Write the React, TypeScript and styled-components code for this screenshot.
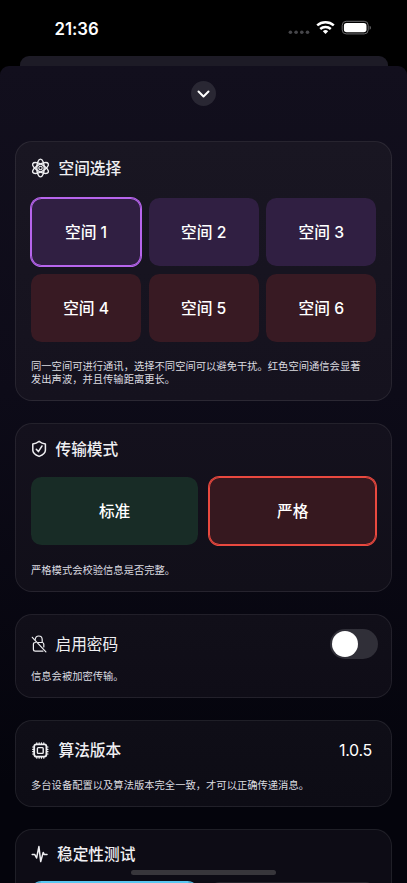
import React from "react";
import styled, { createGlobalStyle } from "styled-components";

const Global = createGlobalStyle`
  * { box-sizing: border-box; }
  html, body { margin: 0; background: #000; overflow: hidden; }
  body { font-family: Inter, "Noto Sans CJK SC", sans-serif; color: #fff; }
`;

const Screen = styled.div`
  position: relative;
  width: 407px;
  height: 883px;
  overflow: hidden;
  background: #000;
  display: flex;
  flex-direction: column;
`;

const StatusBar = styled.header`
  height: 56px;
  flex: none;
  padding: 0 35px 0 54.5px;
  display: flex;
  justify-content: space-between;
  align-items: center;
`;

const Clock = styled.time`
  padding-top: 1px;
  font-size: 16.8px;
  font-weight: 600;
  line-height: 20px;
  letter-spacing: -0.05px;
`;

const BackSheet = styled.div`
  height: 10px;
  flex: none;
  margin: 0 19.5px;
  border-radius: 9px 9px 0 0;
  background: #1d1b26;
`;

const Sheet = styled.main`
  height: 817px;
  flex: none;
  padding: 15px 15px 0;
  border-radius: 9px 9px 0 0;
  background: linear-gradient(180deg, #120f1d 0%, #0d0b18 40%, #04040c 88%, #04040c 100%);
  display: flex;
  flex-direction: column;
`;

const CloseButton = styled.button`
  width: 25px;
  height: 25px;
  flex: none;
  margin: 0 auto 35px;
  padding: 0;
  border: 0;
  border-radius: 50%;
  background: #292733;
  display: grid;
  place-items: center;
`;

const Card = styled.section<{ $height: number; $top: number; $tone: string }>`
  height: ${(p) => p.$height}px;
  flex: none;
  margin-bottom: 22px;
  padding: ${(p) => p.$top}px 14.5px 0 15px;
  border: 1px solid rgba(255, 255, 255, 0.08);
  border-radius: 17px;
  background: ${(p) => p.$tone};
  width: 377px;
`;

const CardHeader = styled.div`
  height: 24px;
  display: flex;
  align-items: center;
  justify-content: space-between;
`;

const Title = styled.h2<{ $gap: number; $weight?: number }>`
  margin: 0;
  display: flex;
  align-items: center;
  gap: ${(p) => p.$gap}px;
  font-size: 15.7px;
  line-height: 24px;
  font-weight: ${(p) => p.$weight ?? 500};
  color: #efeff2;
`;

const TitleText = styled.span`
  padding-top: 2px;
`;

const Version = styled.span`
  font-size: 16px;
  line-height: 24px;
  margin-right: 4.5px;
  letter-spacing: -0.3px;
`;

const TileGrid = styled.div<{ $columns: number; $gap: number; $top: number }>`
  margin-top: ${(p) => p.$top}px;
  width: 345.4px;
  display: grid;
  grid-template-columns: repeat(${(p) => p.$columns}, 1fr);
  gap: 8px ${(p) => p.$gap}px;
`;

const Tile = styled.button<{ $bg: string; $ring?: string }>`
  height: 68px;
  padding: 2px 0 0;
  border: 0;
  border-radius: 10.5px;
  background: ${(p) => p.$bg};
  box-shadow: ${(p) =>
    p.$ring ? `0 0 0 1px ${p.$ring}, inset 0 0 0 1px ${p.$ring}` : "none"};
  color: #fff;
  font: 500 15.7px/24px Inter, "Noto Sans CJK SC", sans-serif;
`;

const Note = styled.p<{ $top: number }>`
  margin: ${(p) => p.$top}px 0 0;
  font-size: 10.31px;
  line-height: 12.5px;
  color: #dcdce0;
  white-space: pre-line;
`;

const Switch = styled.button`
  width: 48px;
  height: 30px;
  margin-right: -1px;
  padding: 2px;
  border: 0;
  border-radius: 15px;
  background: #302f38;
  display: flex;
  flex: none;
`;

const Knob = styled.span`
  width: 26px;
  height: 26px;
  border-radius: 50%;
  background: #fff;
`;

const HomeIndicator = styled.div`
  position: absolute;
  left: 131px;
  top: 870px;
  width: 145px;
  height: 5px;
  border-radius: 3px;
  background: #37363b;
`;

const Icon = styled.svg`
  display: block;
  flex: none;
  overflow: visible;
`;

const line = {
  fill: "none",
  stroke: "currentColor",
  strokeLinecap: "round" as const,
  strokeLinejoin: "round" as const,
};

const StatusIcons = () => (
  <Icon width="84" height="16" viewBox="0 0 84 16">
    <g fill="#46464a">
      {[2.4, 8.1, 13.8, 19.5].map((x) => (
        <circle key={x} cx={x} cy="12.3" r="1.8" />
      ))}
    </g>
    <g fill="none" stroke="#fff" strokeWidth="2.5">
      <path d="M29.2 5.4a12.5 12.5 0 0 1 16.6 0" />
      <path d="M32.2 9a8 8 0 0 1 10.6 0" />
    </g>
    <path d="M37.5 14.1l-2.7-2.8a4 4 0 0 1 5.4 0z" fill="#fff" />
    <rect x="54.2" y="1.3" width="26" height="12.6" rx="4" fill="none" stroke="#6c6c6e" />
    <rect x="55.9" y="2.9" width="22.6" height="9.4" rx="2.8" fill="#fff" />
    <path d="M81.7 5.8c1.5.6 1.5 3.4 0 4z" fill="#77777a" />
  </Icon>
);

const AtomIcon = () => (
  <Icon width="18" height="20" viewBox="-9.5 -10 18 20" {...line} strokeWidth="1.4">
    <ellipse rx="3.7" ry="8.9" />
    <ellipse rx="3.7" ry="8.9" transform="rotate(60)" />
    <ellipse rx="3.7" ry="8.9" transform="rotate(-60)" />
    <circle r="1.7" strokeWidth="1.1" />
  </Icon>
);

const ShieldIcon = () => (
  <Icon width="15" height="18" viewBox="-.6 0 15 18" {...line} strokeWidth="1.5">
    <path d="M7.5 1.3C5.5 2.8 3.5 3.6 1.2 4v6.2c0 2.7 2.4 4.6 6.3 6.2 3.9-1.6 6.3-3.5 6.3-6.2V4c-2.3-.4-4.3-1.2-6.3-2.7z" />
    <path d="M4.7 9.2 6.8 11.6 10.4 6" />
  </Icon>
);

const LockSlashIcon = () => (
  <Icon width="15" height="18" viewBox="-.5 0 15 18" {...line} strokeWidth="1.2">
    <path d="M.8 2.3 14.4 16.8" />
    <path d="M3.8 4.3C4 2.2 5.3 1 7.2 1c2.1 0 3.5 1.5 3.5 3.8v2.7c1.1.1 1.6.6 1.6 1.7v2.7" />
    <path d="M6.4 7.5h4.3M3.9 7.5c-1.5 0-2 .5-2 1.8v5c0 1.3.6 1.9 1.9 1.9h7.6" />
  </Icon>
);

const ChipIcon = () => (
  <Icon width="17" height="17" viewBox="-.8 0 17 17" {...line}>
    <rect x="2.4" y="2.4" width="12.2" height="12.2" rx="2" strokeWidth="1.8" />
    <rect x="5.6" y="5.6" width="5.8" height="5.8" rx=".8" strokeWidth="1.4" />
    <path
      d="M5 .8V2M7.35.8V2M9.65.8V2M12 .8V2M5 15v1.2M7.35 15v1.2M9.65 15v1.2M12 15v1.2M.8 5H2M.8 7.35H2M.8 9.65H2M.8 12H2M15 5h1.2M15 7.35h1.2M15 9.65h1.2M15 12h1.2"
      strokeWidth="1.2"
    />
  </Icon>
);

const PulseIcon = () => (
  <Icon width="16" height="18" viewBox="-.4 0 16 18" {...line} strokeWidth="1.5">
    <path d="M.8 9.6h2.6L5.2 13 7.5 1.6l1.8 15 2.5-9.2 1.1 2.2h2.7" />
  </Icon>
);

const violet = "#301f42";
const maroon = "#381a23";
const spaces = [1, 2, 3, 4, 5, 6];

export default function App() {
  return (
    <>
      <Global />
      <Screen>
        <StatusBar>
          <Clock>21:36</Clock>
          <StatusIcons />
        </StatusBar>
        <BackSheet />
        <Sheet>
          <CloseButton aria-label="关闭">
            <Icon width="13" height="8" viewBox="0 0 13 8" {...line} stroke="#fff" strokeWidth="2">
              <path d="M1.5 1.5 6.5 6.5 11.5 1.5" />
            </Icon>
          </CloseButton>

          <Card $height={260} $top={14} $tone="linear-gradient(#191622, #15121e)">
            <CardHeader>
              <Title $gap={9.5}>
                <AtomIcon />
                <TitleText>空间选择</TitleText>
              </Title>
            </CardHeader>
            <TileGrid $columns={3} $gap={7.5} $top={17.6}>
              {spaces.map((n) => (
                <Tile key={n} $bg={n < 4 ? violet : maroon} $ring={n === 1 ? "#b765ed" : undefined}>
                  空间 {n}
                </Tile>
              ))}
            </TileGrid>
            <Note $top={18.9}>
              {"同一空间可进行通讯，选择不同空间可以避免干扰。红色空间通信会显著\n发出声波，并且传输距离更长。"}
            </Note>
          </Card>

          <Card $height={169} $top={13} $tone="linear-gradient(#14111d, #110f19)">
            <CardHeader>
              <Title $gap={9.5}>
                <ShieldIcon />
                <TitleText>传输模式</TitleText>
              </Title>
            </CardHeader>
            <TileGrid $columns={2} $gap={11} $top={15.6}>
              <Tile $bg="#182c26">标准</Tile>
              <Tile $bg="#36181f" $ring="#e9493f">
                严格
              </Tile>
            </TileGrid>
            <Note $top={19}>严格模式会校验信息是否完整。</Note>
          </Card>

          <Card $height={84} $top={17} $tone="linear-gradient(#110f19, #0f0d17)">
            <CardHeader>
              <Title $gap={9.5} $weight={400}>
                <LockSlashIcon />
                <TitleText>启用密码</TitleText>
              </Title>
              <Switch role="switch" aria-checked={false} aria-label="启用密码">
                <Knob />
              </Switch>
            </CardHeader>
            <Note $top={13.8}>信息会被加密传输。</Note>
          </Card>

          <Card $height={87} $top={17} $tone="linear-gradient(#0f0e17, #0d0c15)">
            <CardHeader>
              <Title $gap={10.5}>
                <ChipIcon />
                <TitleText>算法版本</TitleText>
              </Title>
              <Version>1.0.5</Version>
            </CardHeader>
            <Note $top={16.5}>多台设备配置以及算法版本完全一致，才可以正确传递消息。</Note>
          </Card>

          <Card $height={140} $top={12} $tone="#0d0c15">
            <CardHeader>
              <Title $gap={10}>
                <PulseIcon />
                <TitleText>稳定性测试</TitleText>
              </Title>
            </CardHeader>
            <TileGrid $columns={2} $gap={11} $top={16}>
              <Tile $bg="#173542" $ring="#5ac8f2" aria-label="开始" />
              <Tile $bg="#25242c" aria-label="停止" />
            </TileGrid>
          </Card>
        </Sheet>
        <HomeIndicator />
      </Screen>
    </>
  );
}
